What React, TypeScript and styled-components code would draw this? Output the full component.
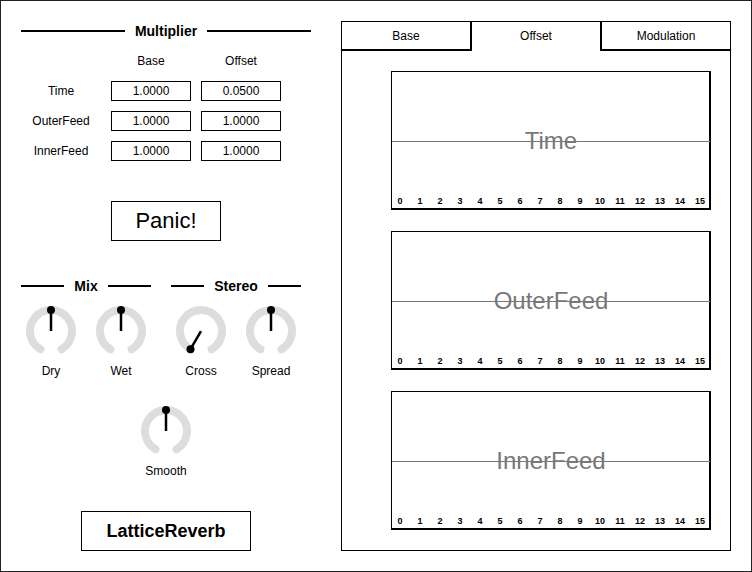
import React from 'react';
import styled, { createGlobalStyle } from 'styled-components';

const GlobalStyle = createGlobalStyle`
  body {
    margin: 0;
    background: #fff;
  }
`;

const Frame = styled.div`
  width: 752px;
  height: 572px;
  box-sizing: border-box;
  border: 1px solid #222;
  display: flex;
  background: #fff;
  color: #000;
  font-family: "Liberation Sans", Arial, sans-serif;
`;

const LeftPanel = styled.div`
  width: 340px;
  box-sizing: border-box;
  padding: 20px 30px 0 20px;
  display: flex;
  flex-direction: column;
  align-items: flex-start;
`;

const SectionHeader = styled.div<{ $width: number }>`
  width: ${(p) => p.$width}px;
  height: 20px;
  display: flex;
  align-items: center;
  gap: 10px;
  font-size: 14px;
  font-weight: bold;

  &::before,
  &::after {
    content: '';
    flex: 1;
    height: 2px;
    background: #000;
  }
`;

const ParamGrid = styled.div`
  margin-top: 5px;
  display: grid;
  grid-template-columns: repeat(3, 80px);
  grid-auto-rows: 30px;
  column-gap: 10px;
  align-items: center;
  justify-items: center;
  font-size: 12px;
`;

const ValueInput = styled.input`
  width: 80px;
  height: 20px;
  box-sizing: border-box;
  border: 1px solid #000;
  padding: 0;
  margin: 0;
  text-align: center;
  font-family: inherit;
  font-size: 12px;
  color: #000;
  background: #fff;
  outline: none;
`;

const PanicButton = styled.button`
  align-self: center;
  margin-top: 35px;
  width: 110px;
  height: 40px;
  box-sizing: border-box;
  border: 1px solid #000;
  background: #fff;
  font-family: inherit;
  font-size: 22px;
  color: #000;
  padding: 0;
`;

const KnobSections = styled.div`
  margin-top: 35px;
  display: flex;
  gap: 20px;
`;

const KnobSection = styled.div`
  display: flex;
  flex-direction: column;
`;

const KnobRow = styled.div`
  margin-top: 10px;
  display: flex;
  gap: 10px;
`;

const KnobCell = styled.div<{ $center?: boolean }>`
  width: 60px;
  display: flex;
  flex-direction: column;
  align-items: center;
  align-self: ${(p) => (p.$center ? 'center' : 'auto')};
  margin-top: ${(p) => (p.$center ? '28px' : '0')};

  svg {
    display: block;
  }
`;

const KnobLabel = styled.div`
  margin-top: 8px;
  font-size: 12px;
  line-height: 14px;
  white-space: nowrap;
`;

const TitleBox = styled.div`
  align-self: center;
  margin-top: 33px;
  width: 170px;
  height: 40px;
  box-sizing: border-box;
  border: 1px solid #000;
  display: flex;
  align-items: center;
  justify-content: center;
  font-size: 18px;
  font-weight: bold;
`;

const RightPanel = styled.div`
  margin-top: 20px;
  width: 390px;
  height: 530px;
  box-sizing: border-box;
  border: 1px solid #000;
  display: flex;
  flex-direction: column;
`;

const TabBar = styled.div`
  display: flex;
  height: 29px;
`;

const Tab = styled.div<{ $active?: boolean; $thick?: 'left' | 'right' }>`
  flex: 1;
  box-sizing: border-box;
  display: flex;
  align-items: center;
  justify-content: center;
  font-size: 12px;
  border-bottom: 2px solid ${(p) => (p.$active ? 'transparent' : '#000')};
  border-left: ${(p) => (p.$thick === 'left' ? '2px solid #000' : 'none')};
  border-right: ${(p) => (p.$thick === 'right' ? '2px solid #000' : 'none')};
`;

const GraphList = styled.div`
  padding: 20px 19px 0 49px;
  display: flex;
  flex-direction: column;
  gap: 21px;
`;

const Graph = styled.div`
  height: 139px;
  box-sizing: border-box;
  border: 1px solid #000;
  border-right-width: 2px;
  border-bottom-width: 2px;
  display: grid;

  & > * {
    grid-area: 1 / 1;
  }
`;

const CenterLine = styled.div`
  align-self: center;
  margin-top: 2px;
  height: 1px;
  background: #777;
`;

const GraphLabel = styled.div`
  align-self: center;
  justify-self: center;
  margin-top: 2px;
  font-size: 24px;
  line-height: 1;
  color: #777;
`;

const Ticks = styled.div`
  align-self: end;
  margin-left: -2px;
  display: grid;
  grid-template-columns: repeat(16, 20px);
  justify-items: center;
  padding-bottom: 1px;
  font-size: 9px;
  font-weight: bold;
  line-height: 11px;
`;

const R = 21;
const point = (deg: number) => {
  const a = (deg * Math.PI) / 180;
  return { x: 25 + R * Math.sin(a), y: 25 - R * Math.cos(a) };
};

const Knob = ({ label, angle = 0, center }: { label: string; angle?: number; center?: boolean }) => {
  const start = point(-150);
  const end = point(150);
  const tip = point(angle);
  return (
    <KnobCell $center={center}>
      <svg width="50" height="50" viewBox="0 0 50 50">
        <path
          d={`M ${start.x} ${start.y} A ${R} ${R} 0 1 1 ${end.x} ${end.y}`}
          fill="none"
          stroke="#ddd"
          strokeWidth="8"
          strokeLinecap="round"
        />
        <line x1="25" y1="25" x2={tip.x} y2={tip.y} stroke="#000" strokeWidth="2.5" />
        <circle cx={tip.x} cy={tip.y} r="4" fill="#000" />
      </svg>
      <KnobLabel>{label}</KnobLabel>
    </KnobCell>
  );
};

const params = [
  { name: 'Time', base: '1.0000', offset: '0.0500' },
  { name: 'OuterFeed', base: '1.0000', offset: '1.0000' },
  { name: 'InnerFeed', base: '1.0000', offset: '1.0000' },
];

const ticks = Array.from({ length: 16 }, (_, i) => i);

export default function App() {
  return (
    <>
      <GlobalStyle />
      <Frame>
        <LeftPanel>
          <SectionHeader $width={290}>Multiplier</SectionHeader>
          <ParamGrid>
            <span />
            <span>Base</span>
            <span>Offset</span>
            {params.map((p) => (
              <React.Fragment key={p.name}>
                <span>{p.name}</span>
                <ValueInput defaultValue={p.base} />
                <ValueInput defaultValue={p.offset} />
              </React.Fragment>
            ))}
          </ParamGrid>

          <PanicButton>Panic!</PanicButton>

          <KnobSections>
            <KnobSection>
              <SectionHeader $width={130}>Mix</SectionHeader>
              <KnobRow>
                <Knob label="Dry" />
                <Knob label="Wet" />
              </KnobRow>
            </KnobSection>
            <KnobSection>
              <SectionHeader $width={130}>Stereo</SectionHeader>
              <KnobRow>
                <Knob label="Cross" angle={-150} />
                <Knob label="Spread" />
              </KnobRow>
            </KnobSection>
          </KnobSections>

          <Knob label="Smooth" center />

          <TitleBox>LatticeReverb</TitleBox>
        </LeftPanel>

        <RightPanel>
          <TabBar>
            <Tab $thick="right">Base</Tab>
            <Tab $active>Offset</Tab>
            <Tab $thick="left">Modulation</Tab>
          </TabBar>
          <GraphList>
            {params.map((p) => (
              <Graph key={p.name}>
                <CenterLine />
                <GraphLabel>{p.name}</GraphLabel>
                <Ticks>
                  {ticks.map((t) => (
                    <span key={t}>{t}</span>
                  ))}
                </Ticks>
              </Graph>
            ))}
          </GraphList>
        </RightPanel>
      </Frame>
    </>
  );
}
